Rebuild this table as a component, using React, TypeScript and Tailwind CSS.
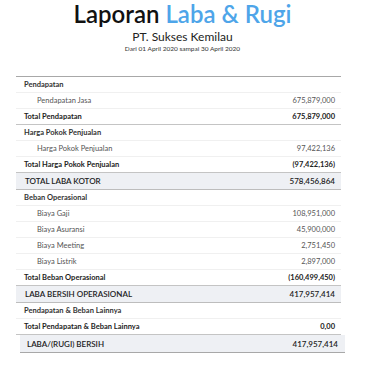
import React from "react";

type Row = { kind: "head" | "detail" | "total" | "grand"; label: string; value?: string };

const rows: Row[] = [
  { kind: "head", label: "Pendapatan" },
  { kind: "detail", label: "Pendapatan Jasa", value: "675,879,000" },
  { kind: "total", label: "Total Pendapatan", value: "675,879,000" },
  { kind: "head", label: "Harga Pokok Penjualan" },
  { kind: "detail", label: "Harga Pokok Penjualan", value: "97,422,136" },
  { kind: "total", label: "Total Harga Pokok Penjualan", value: "(97,422,136)" },
  { kind: "grand", label: "TOTAL LABA KOTOR", value: "578,456,864" },
  { kind: "head", label: "Beban Operasional" },
  { kind: "detail", label: "Biaya Gaji", value: "108,951,000" },
  { kind: "detail", label: "Biaya Asuransi", value: "45,900,000" },
  { kind: "detail", label: "Biaya Meeting", value: "2,751,450" },
  { kind: "detail", label: "Biaya Listrik", value: "2,897,000" },
  { kind: "total", label: "Total Beban Operasional", value: "(160,499,450)" },
  { kind: "grand", label: "LABA BERSIH OPERASIONAL", value: "417,957,414" },
  { kind: "head", label: "Pendapatan & Beban Lainnya" },
  { kind: "total", label: "Total Pendapatan & Beban Lainnya", value: "0,00" },
];

function RowView({ r }: { r: Row }) {
  if (r.kind === "head")
    return (
      <div className="flex h-[16px] items-center border-b border-[#f0f0f0] pl-[8px] pr-[6px] text-[7.5px] font-bold text-[#333]">
        {r.label}
      </div>
    );
  if (r.kind === "detail")
    return (
      <div className="flex h-[16px] items-center justify-between border-b border-[#f0f0f0] pl-[21px] pr-[6px] text-[7.5px] text-[#555]">
        <span>{r.label}</span>
        <span>{r.value}</span>
      </div>
    );
  if (r.kind === "total")
    return (
      <div className="flex h-[16px] items-center justify-between border-b border-[#c4c4c4] pl-[8px] pr-[6px] text-[7.5px] font-bold text-[#222]">
        <span>{r.label}</span>
        <span>{r.value}</span>
      </div>
    );
  return (
    <div className="flex h-[17px] items-center justify-between border-b border-[#bdbdbd] bg-[#eef0f4] pl-[9px] pr-[6px] text-[8px] font-semibold text-[#222]">
      <span>{r.label}</span>
      <span>{r.value}</span>
    </div>
  );
}

export default function App() {
  return (
    <div
      className="h-[377px] w-[365px] bg-white"
      style={{ fontFamily: "Lato, 'Noto Sans', sans-serif" }}
    >
      <div className="pt-[0px] text-center text-[24px] font-semibold leading-[28px] text-[#111]">
        Laporan <span className="text-[#4ea5e9]">Laba &amp; Rugi</span>
      </div>
      <div className="mt-[2px] text-center text-[12px] leading-[14px] text-[#222]">PT. Sukses Kemilau</div>
      <div className="mt-[1px] text-center text-[6.5px] leading-[8px] text-[#333]">
        Dari 01 April 2020 sampai 30 April 2020
      </div>
      <div className="ml-[16px] mr-[24px] mt-[23px] border-t-[1.5px] border-[#a8a8a8]">
        {rows.map((r, i) => (
          <RowView key={i} r={r} />
        ))}
      </div>
      <div className="ml-[20px] mr-[20px] flex h-[18px] items-center justify-between border-b-[1.5px] border-[#a8a8a8] bg-[#eef0f4] pl-[7px] pr-[7px] text-[8px] font-semibold text-[#222]">
        <span>LABA/(RUGI) BERSIH</span>
        <span>417,957,414</span>
      </div>
    </div>
  );
}
